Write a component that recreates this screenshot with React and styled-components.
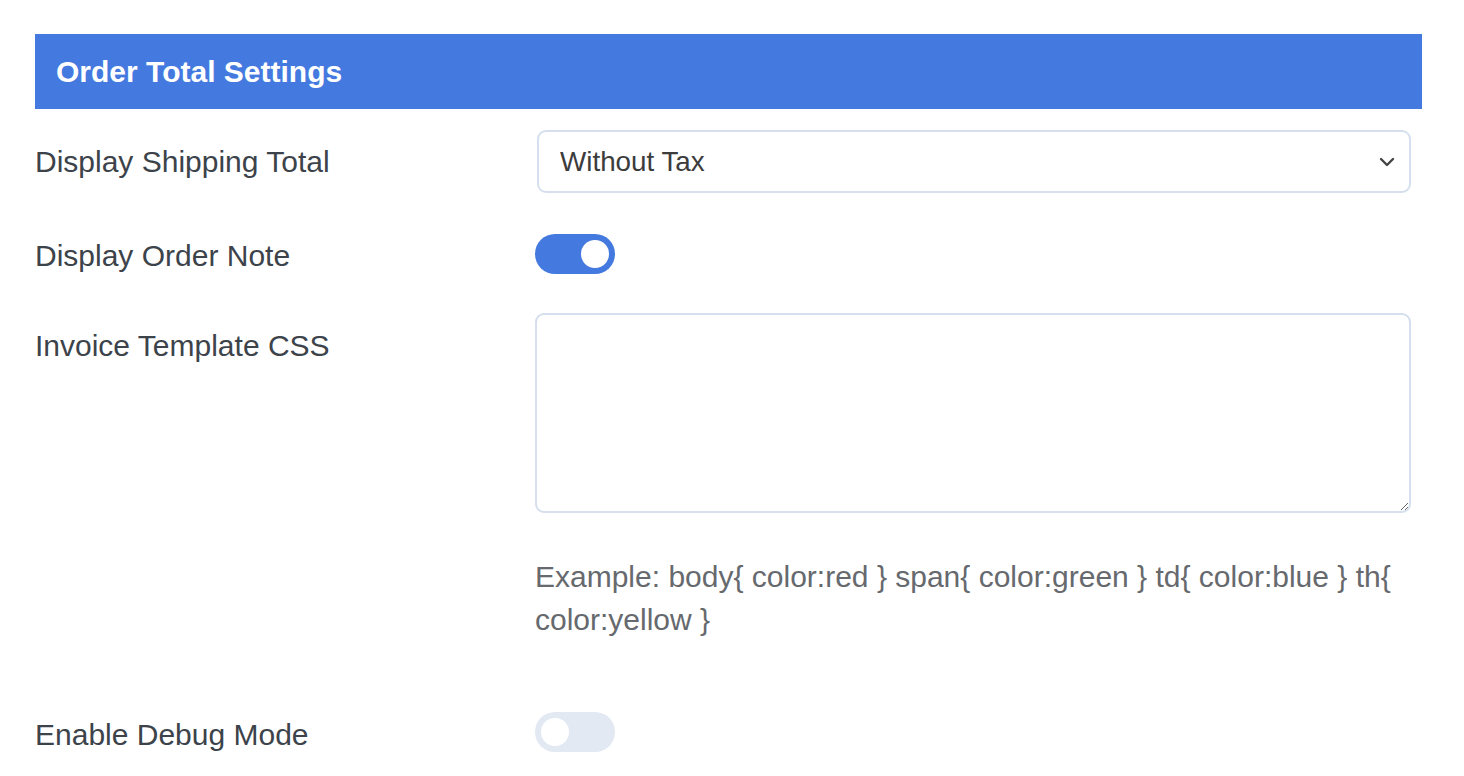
import React, { useState } from 'react';
import styled, { createGlobalStyle } from 'styled-components';

const GlobalStyle = createGlobalStyle`
  html, body {
    margin: 0;
    padding: 0;
    background: #fff;
    font-family: "Liberation Sans", Arial, Helvetica, sans-serif;
  }
`;

const Page = styled.div`
  padding: 34px 42px 0 35px;
`;

const Header = styled.div`
  height: 75px;
  background: #4479df;
  display: flex;
  align-items: center;
  padding: 0 21px;
`;

const Title = styled.h2`
  margin: 0;
  color: #fff;
  font-size: 30px;
  font-weight: 700;
`;

const Form = styled.div`
  padding-top: 1px;
`;

const Row = styled.div`
  display: flex;
  align-items: ${p => (p.top ? 'flex-start' : 'center')};
  padding: ${p => p.pad || '20px 0'};
`;

// nudge: shifts the text down without changing the row height
const Label = styled.div`
  width: 500px;
  flex-shrink: 0;
  color: #3c434a;
  font-size: 30px;
  line-height: 44px;
  padding-top: ${p => (p.offset || 0) + (p.nudge || 0)}px;
  margin-bottom: ${p => -(p.nudge || 0)}px;
`;

const Control = styled.div`
  flex: 1;
  margin-right: 11px;
`;

const SelectWrap = styled.div`
  position: relative;
  margin-left: 2px;
`;

const Select = styled.select`
  appearance: none;
  width: 100%;
  height: 63px;
  border: 2px solid #d5dfed;
  border-radius: 9px;
  background: #fff;
  padding: 0 50px 0 21px;
  font-family: inherit;
  font-size: 27.8px;
  color: #3c3c3c;
  outline: none;
`;

const Chevron = styled.svg`
  position: absolute;
  right: 16px;
  top: 50%;
  transform: translateY(-50%);
  pointer-events: none;
`;

const Track = styled.button`
  position: relative;
  width: 80px;
  height: 40px;
  border: none;
  border-radius: 20px;
  padding: 0;
  cursor: pointer;
  background: ${p => (p.on ? '#4479df' : '#e3e9f3')};
  display: block;
`;

const Knob = styled.span`
  position: absolute;
  top: 6px;
  left: ${p => (p.on ? '46px' : '6px')};
  width: 28px;
  height: 28px;
  border-radius: 50%;
  background: #fff;
`;

const TextArea = styled.textarea`
  display: block;
  box-sizing: border-box;
  width: 100%;
  height: 200px;
  border: 2px solid #d5dfed;
  border-radius: 9px;
  resize: vertical;
  outline: none;
  font-family: inherit;
  font-size: 20px;
  padding: 10px 16px;
`;

const Help = styled.p`
  margin: 42px 0 0;
  color: #66696d;
  font-size: 30px;
  line-height: 43px;
`;

const Toggle = ({ initial }) => {
  const [on, setOn] = useState(initial);
  return (
    <Track on={on ? 1 : 0} onClick={() => setOn(!on)}>
      <Knob on={on ? 1 : 0} />
    </Track>
  );
};

const App = () => {
  return (
    <Page>
      <GlobalStyle />
      <Header>
        <Title>Order Total Settings</Title>
      </Header>
      <Form>
        <Row pad="20px 0 19px">
          <Label>Display Shipping Total</Label>
          <Control>
            <SelectWrap>
              <Select defaultValue="without">
                <option value="without">Without Tax</option>
                <option value="with">With Tax</option>
              </Select>
              <Chevron width="16" height="10" viewBox="0 0 16 10">
                <path d="M2 2l6 6 6-6" fill="none" stroke="#444" strokeWidth="2.4" strokeLinecap="round" strokeLinejoin="round" />
              </Chevron>
            </SelectWrap>
          </Control>
        </Row>
        <Row pad="20px 0 17px">
          <Label nudge={2}>Display Order Note</Label>
          <Control>
            <Toggle initial={true} />
          </Control>
        </Row>
        <Row top pad="20px 0 0">
          <Label offset={11}>Invoice Template CSS</Label>
          <Control>
            <TextArea />
            <Help>
              Example: body{'{'} color:red {'}'} span{'{'} color:green {'}'} td{'{'} color:blue {'}'} th{'{'} color:yellow {'}'}
            </Help>
          </Control>
        </Row>
        <Row pad="69px 0 20px">
          <Label nudge={3}>Enable Debug Mode</Label>
          <Control>
            <Toggle initial={false} />
          </Control>
        </Row>
      </Form>
    </Page>
  );
};

export default App;
